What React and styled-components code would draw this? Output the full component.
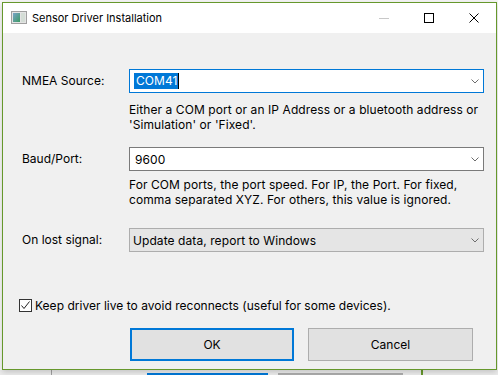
import React from 'react';
import styled, { createGlobalStyle } from 'styled-components';

const Global = createGlobalStyle`
  html, body { margin: 0; padding: 0; background: #ffffff; }
  body { width: 498px; height: 375px; overflow: hidden; font-family: Inter, "Noto Sans", sans-serif; }
`;

const Screen = styled.div`
  width: 498px;
  height: 375px;
  overflow: hidden;
  background: #f7f7f7;
  display: flex;
  flex-direction: column;
  padding: 2px 1px 0 2px;
  box-sizing: border-box;
`;

const Window = styled.div`
  width: 495px;
  height: 368px;
  box-sizing: border-box;
  border: 1px solid #66982c;
  background: #f0f0f0;
  display: flex;
  flex-direction: column;
  flex: none;
  box-shadow: 0 2px 6px rgba(0,0,0,0.18);
  position: relative;
  z-index: 1;
`;

const TitleBar = styled.div`
  height: 30px;
  background: #ffffff;
  display: flex;
  align-items: center;
  flex: none;
`;

const AppIcon = styled.svg`
  margin-left: 8px;
  margin-top: -1px;
  width: 16px;
  height: 13px;
  flex: none;
`;

const Title = styled.div`
  margin-left: 5px;
  font-size: 11px;
  color: #000;
  flex: 1;
  white-space: nowrap;
`;

const CaptionButton = styled.div`
  width: 45px;
  height: 30px;
  display: flex;
  align-items: center;
  justify-content: center;
  flex: none;
`;

const Body = styled.div`
  flex: 1;
  display: flex;
  flex-direction: column;
  padding: 36px 12px 0 19px;
`;

const Row = styled.div`
  display: grid;
  grid-template-columns: 107px 1fr;
  margin-top: ${p => p.$gap || 0}px;
`;

const Label = styled.div`
  font-size: 12px;
  color: #000;
  height: 24px;
  line-height: 24px;
`;

const Combo = styled.div`
  height: 24px;
  box-sizing: border-box;
  border: 1px solid ${p => p.$focus ? '#0078d7' : p.$disabled ? '#adadad' : '#7a7a7a'};
  background: ${p => p.$disabled ? '#e5e5e5' : '#ffffff'};
  display: flex;
  align-items: center;
  padding: 0 4px 0 ${p => p.$disabled ? 3 : 5}px;
  font-size: 12px;
  color: #000;
`;

const ComboText = styled.div`
  flex: 1;
  display: flex;
  align-items: center;
  white-space: nowrap;
  letter-spacing: 0.08px;
`;

const Selected = styled.span`
  display: inline-block;
  background: #0078d7;
  color: #fff;
  height: 16px;
  line-height: 16px;
  margin-left: -1px;
  padding-left: 2px;
`;

const Caret = styled.span`
  display: inline-block;
  width: 1px;
  height: 16px;
  background: #000;
`;

const Help = styled.div`
  grid-column: 2;
  font-size: 12px;
  line-height: 15px;
  letter-spacing: 0.08px;
  color: #000;
  margin-top: ${p => p.$gap || 0}px;
`;

const CheckRow = styled.label`
  display: flex;
  align-items: center;
  height: 15px;
  line-height: 15px;
  font-size: 12px;
  letter-spacing: 0.02px;
  color: #000;
  margin-top: 46px;
  margin-left: -3px;
  white-space: nowrap;
`;

const Box = styled.span`
  width: 13px;
  height: 13px;
  box-sizing: border-box;
  border: 1px solid #333;
  background: #fff;
  display: flex;
  align-items: center;
  justify-content: center;
  margin-right: 3px;
  flex: none;
`;

const Buttons = styled.div`
  display: flex;
  gap: 14px;
  margin-top: 15px;
  margin-left: 108px;
`;

const Button = styled.div`
  width: ${p => p.$w}px;
  height: 33px;
  box-sizing: border-box;
  border: ${p => p.$default ? '2px solid #0078d7' : '1px solid #adadad'};
  background: #e1e1e1;
  display: flex;
  align-items: center;
  justify-content: center;
  font-size: 12px;
  color: #000;
`;

const Under = styled.div`
  flex: 1;
  display: flex;
  background: #ececec;
  margin-left: -2px;
  margin-right: -1px;
`;

const UnderPart = styled.div`
  width: ${p => p.$w}px;
  margin-left: ${p => p.$m || 0}px;
  margin-top: ${p => p.$top || 0}px;
  background: ${p => p.$c};
  box-sizing: border-box;
  ${p => p.$b ? `border: 1px solid ${p.$b};` : ''}
`;

const Chevron = () => (
  <svg width="8" height="5" viewBox="0 0 8 5">
    <polyline points="0.5,0.5 4,4 7.5,0.5" fill="none" stroke="#6d6d6d" strokeWidth="1" />
  </svg>
);

export default function App() {
  return (
    <>
      <Global />
      <Screen>
        <Window>
          <TitleBar>
            <AppIcon viewBox="0 0 16 13">
              <defs>
                <linearGradient id="g" x1="0" y1="0" x2="1" y2="1">
                  <stop offset="0" stopColor="#7aa4c8" />
                  <stop offset="1" stopColor="#3c9a64" />
                </linearGradient>
              </defs>
              <rect x="0.5" y="0.5" width="15" height="12" fill="#e4e4e4" stroke="#a0a0a0" />
              <rect x="2" y="2" width="7" height="9" fill="url(#g)" />
              <rect x="10" y="2" width="4" height="9" fill="#d4ddd6" />
            </AppIcon>
            <Title>Sensor Driver Installation</Title>
            <CaptionButton>
              <svg width="10" height="1" viewBox="0 0 10 1"><rect width="10" height="1" fill="#c8c8c8" /></svg>
            </CaptionButton>
            <CaptionButton>
              <svg width="10" height="10" viewBox="0 0 10 10"><rect x="0.5" y="0.5" width="9" height="9" fill="none" stroke="#000" /></svg>
            </CaptionButton>
            <CaptionButton>
              <svg width="10" height="10" viewBox="0 0 10 10"><path d="M0.5 0.5 L9.5 9.5 M9.5 0.5 L0.5 9.5" stroke="#000" strokeWidth="1" /></svg>
            </CaptionButton>
          </TitleBar>
          <Body>
            <Row>
              <Label>NMEA Source:</Label>
              <Combo $focus>
                <ComboText><Selected>COM41</Selected><Caret /></ComboText>
                <Chevron />
              </Combo>
              <Help $gap={9}>Either a COM port or an IP Address or a bluetooth address or<br />'Simulation' or 'Fixed'.</Help>
            </Row>
            <Row $gap={15}>
              <Label>Baud/Port:</Label>
              <Combo>
                <ComboText>9600</ComboText>
                <Chevron />
              </Combo>
              <Help $gap={6}>For COM ports, the port speed. For IP, the Port. For fixed,<br />comma separated XYZ. For others, this value is ignored.</Help>
            </Row>
            <Row $gap={21}>
              <Label>On lost signal:</Label>
              <Combo $disabled>
                <ComboText>Update data, report to Windows</ComboText>
                <Chevron />
              </Combo>
            </Row>
            <CheckRow>
              <Box>
                <svg width="11" height="11" viewBox="0 0 11 11"><polyline points="1.5,5.5 4,8.5 9.5,1.5" fill="none" stroke="#222" strokeWidth="1" /></svg>
              </Box>
              Keep driver live to avoid reconnects (useful for some devices).
            </CheckRow>
            <Buttons>
              <Button $default $w={164}>OK</Button>
              <Button $w={165}>Cancel</Button>
            </Buttons>
          </Body>
        </Window>
        <Under>
          <UnderPart $w={1} $m={51} $c="#a0a0a0" />
          <UnderPart $w={121} $m={95} $top={3} $c="#0078d7" />
          <UnderPart $w={125} $m={10} $top={3} $c="#e1e1e1" $b="#adadad" />
          <UnderPart $w={2} $m={18} $c="#66982c" />
        </Under>
      </Screen>
    </>
  );
}
